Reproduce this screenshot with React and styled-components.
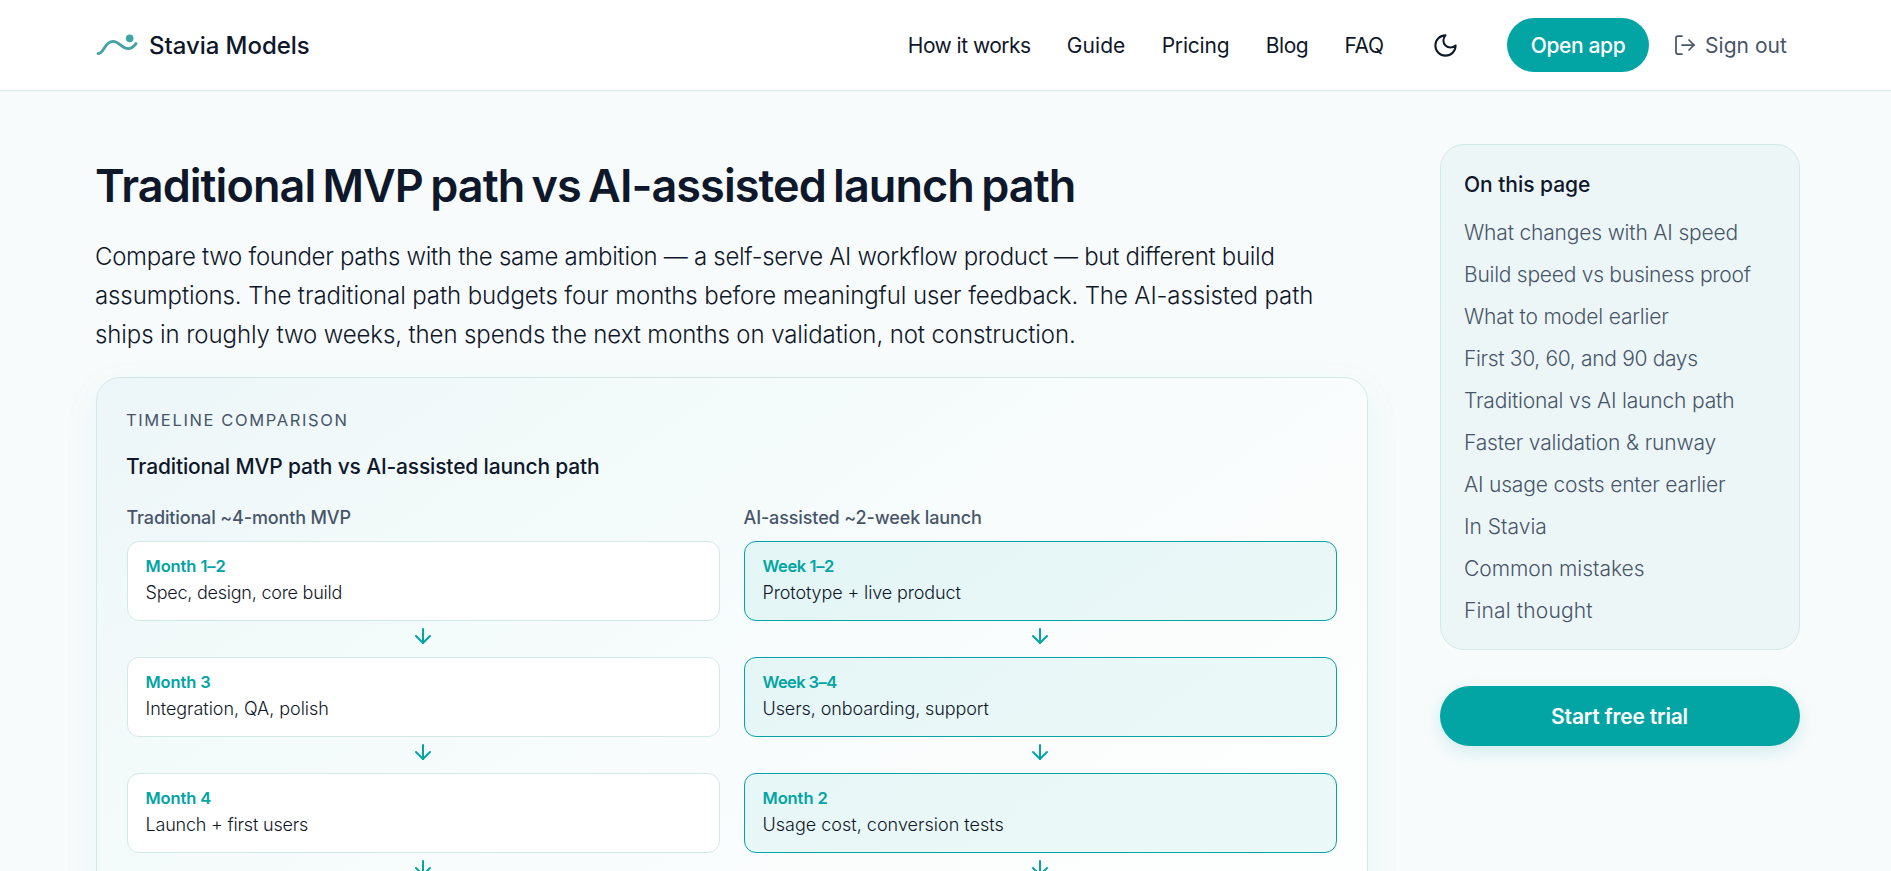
import React from 'react';
import styled, { createGlobalStyle } from 'styled-components';
import { ArrowDown, LogOut } from 'lucide-react';

const GlobalStyle = createGlobalStyle`
  *, *::before, *::after { box-sizing: border-box; }
  html, body, #root { height: 100%; }
  body {
    margin: 0;
    overflow: hidden;
    background: #f8fbfc;
    color: #0f172a;
    font-family: Inter, "Liberation Sans", sans-serif;
    font-weight: 300;
  }
  h1, h2, h3, p, ul { margin: 0; padding: 0; }
  a { color: inherit; text-decoration: none; }
  button { font: inherit; border: 0; cursor: pointer; }
`;

/* Text run with its own tracking, in em. */
const Tracked = styled.span`
  letter-spacing: ${(p) => p.$ls || 0}em;
  white-space: nowrap;
`;

const Header = styled.header`
  display: flex;
  align-items: center;
  justify-content: space-between;
  height: 91px;
  padding: 0 91px 0 96px;
  background: #fff;
  border-bottom: 1px solid #d5e8e8;
`;

const Brand = styled.a`
  display: flex;
  align-items: center;
  gap: 11px;
  font-size: 24px;
  font-weight: 500;
`;

const Actions = styled.div`
  display: flex;
  align-items: center;
`;

const Nav = styled.nav`
  display: flex;
  gap: 36.3px;
  font-size: 21px;
  font-weight: 400;
`;

const ThemeButton = styled.button`
  display: grid;
  place-items: center;
  width: 50.5px;
  height: 54px;
  margin: 0 36px 0 37px;
  padding: 0;
  background: none;
  color: #0f172a;
`;

const OpenApp = styled.a`
  display: flex;
  align-items: center;
  justify-content: center;
  width: 142px;
  height: 54px;
  border-radius: 27px;
  background: #02a4a4;
  color: #fff;
  font-size: 21px;
  font-weight: 500;
`;

const SignOut = styled.button`
  display: flex;
  align-items: center;
  gap: 8px;
  width: 151px;
  padding: 0 0 0 24px;
  background: none;
  color: #475569;
  font-size: 21px;
  font-weight: 400;
`;

const Layout = styled.main`
  display: grid;
  grid-template-columns: 1272px 360px;
  column-gap: 72px;
  padding: 53px 91px 0 96px;
`;

const Article = styled.article`
  padding-top: 15px;
`;

const Heading = styled.h1`
  margin-left: -1px;
  font-size: 45px;
  line-height: 54px;
  font-weight: 600;
  word-spacing: -0.07em;
`;

const Lead = styled.p`
  display: flex;
  flex-direction: column;
  margin: 24px 0 23px -1px;
  font-size: 24px;
  line-height: 39px;
`;

const Panel = styled.section`
  min-height: 640px;
  padding: 30px;
  border: 1px solid #d5e8e8;
  border-radius: 24px;
  background: linear-gradient(145deg, #edf6f8 0%, #f2fafa 25%, #fbfdfd 65%, #fff 100%);
  box-shadow: 0 12px 36px rgba(2, 164, 164, 0.07);
`;

const Eyebrow = styled.p`
  margin-left: -1px;
  font-size: 16.5px;
  line-height: 24px;
  font-weight: 400;
  color: #475569;
  text-transform: uppercase;
`;

const PanelTitle = styled.h2`
  margin: 20px 0 23px -1px;
  font-size: 21px;
  line-height: 30px;
  font-weight: 500;
`;

const Columns = styled.div`
  display: grid;
  grid-template-columns: 1fr 1fr;
  gap: 24px;
`;

const ColumnTitle = styled.h3`
  margin: 0 0 10px -0.5px;
  font-size: 18px;
  line-height: 26px;
  font-weight: 500;
  color: #475569;
`;

const Step = styled.div`
  height: 80px;
  padding: 12px 17.5px;
  border: 1px solid ${(p) => (p.$accent ? '#02a4a4' : '#d5e8e8')};
  border-radius: 12px;
  background: ${(p) => (p.$accent ? 'rgba(2, 164, 164, 0.07)' : '#fff')};
`;

const StepWhen = styled.p`
  font-size: 16.5px;
  line-height: 24px;
  font-weight: 600;
  color: #02a4a4;
`;

const StepWhat = styled.p`
  margin-top: 1px;
  font-size: 18px;
  line-height: 27px;
`;

const Connector = styled.div`
  display: flex;
  justify-content: center;
  height: 36px;
  padding: 3px 2px 0 0;
  color: #02a4a4;
`;

const Toc = styled.nav`
  height: 506px;
  padding: 25px 23px 0;
  border: 1px solid #d5e8e8;
  border-radius: 24px;
  background: #edf6f7;
`;

const TocTitle = styled.p`
  margin-bottom: 12px;
  font-size: 21px;
  line-height: 30px;
  font-weight: 500;
`;

const TocList = styled.ul`
  list-style: none;
  font-size: 21px;
  line-height: 42px;
  color: #475569;
`;

const TrialButton = styled.a`
  display: flex;
  align-items: center;
  justify-content: center;
  height: 60px;
  margin-top: 36px;
  padding-right: 1px;
  border-radius: 30px;
  background: #02a4a4;
  box-shadow: 0 6px 18px rgba(2, 164, 164, 0.16);
  color: #fff;
  font-size: 21px;
  font-weight: 600;
`;

const navItems = [
  ['How it works', -0.0248],
  ['Guide', 0.002],
  ['Pricing', -0.0097],
  ['Blog', -0.0193],
  ['FAQ', -0.0229],
];

const leadLines = [
  ['Compare two founder paths with the same ambition — a self-serve AI workflow product — but different build', -0.0126],
  ['assumptions. The traditional path budgets four months before meaningful user feedback. The AI-assisted path', -0.0042],
  ['ships in roughly two weeks, then spends the next months on validation, not construction.', -0.0043],
];

const columns = [
  {
    title: ['Traditional ~4-month MVP', -0.0078],
    steps: [
      [['Month 1–2', -0.0053], ['Spec, design, core build', -0.0131]],
      [['Month 3', -0.0079], ['Integration, QA, polish', -0.0026]],
      [['Month 4', -0.0079], ['Launch + first users', -0.0107]],
    ],
  },
  {
    title: ['AI-assisted ~2-week launch', -0.0071],
    accent: true,
    steps: [
      [['Week 1–2', -0.0242], ['Prototype + live product', -0.0065]],
      [['Week 3–4', -0.036], ['Users, onboarding, support', -0.0055]],
      [['Month 2', -0.0048], ['Usage cost, conversion tests', 0.0003]],
    ],
  },
];

const tocItems = [
  ['What changes with AI speed', -0.0083],
  ['Build speed vs business proof', -0.012],
  ['What to model earlier', -0.0085],
  ['First 30, 60, and 90 days', -0.0159],
  ['Traditional vs AI launch path', -0.0081],
  ['Faster validation & runway', -0.0076],
  ['AI usage costs enter earlier', -0.0085],
  ['In Stavia', 0.0008],
  ['Common mistakes', -0.0006],
  ['Final thought', 0.0072],
];

const Logo = () => (
  <svg width="42" height="30" viewBox="0 0 42 30" fill="none" aria-hidden="true">
    <path
      d="M2 23.6C8.3 23.6 8.4 11.4 17 11.4C23.5 11.4 25.3 18.6 32.2 18.6C36 18.6 38 16.2 40 13.6"
      stroke="#45a2a3"
      strokeWidth="2.9"
      strokeLinecap="round"
    />
    <circle cx="33.7" cy="8.4" r="3.8" fill="#3da5a5" />
  </svg>
);

const Moon = () => (
  <svg width="27" height="27" viewBox="0 0 24 24" fill="none" stroke="currentColor" strokeWidth="1.8" strokeLinecap="round" strokeLinejoin="round" aria-hidden="true">
    <path d="M12 3a6 6 0 0 0 9 9 9 9 0 1 1-9-9Z" />
  </svg>
);

export default function App() {
  return (
    <>
      <GlobalStyle />
      <Header>
        <Brand href="#">
          <Logo />
          <Tracked $ls={-0.002}>Stavia Models</Tracked>
        </Brand>
        <Actions>
          <Nav>
            {navItems.map(([label, ls]) => (
              <a href="#" key={label}><Tracked $ls={ls}>{label}</Tracked></a>
            ))}
          </Nav>
          <ThemeButton aria-label="Toggle theme"><Moon /></ThemeButton>
          <OpenApp href="#"><Tracked $ls={-0.0174}>Open app</Tracked></OpenApp>
          <SignOut>
            <LogOut size={24} strokeWidth={1.75} />
            <Tracked $ls={0.0016}>Sign out</Tracked>
          </SignOut>
        </Actions>
      </Header>
      <Layout>
        <Article>
          <Heading><Tracked $ls={-0.0208}>Traditional MVP path vs AI-assisted launch path</Tracked></Heading>
          <Lead>
            {leadLines.map(([line, ls]) => (
              <Tracked key={line} $ls={ls}>{line}</Tracked>
            ))}
          </Lead>
          <Panel>
            <Eyebrow><Tracked $ls={0.0987}>Timeline comparison</Tracked></Eyebrow>
            <PanelTitle><Tracked $ls={-0.0075}>Traditional MVP path vs AI-assisted launch path</Tracked></PanelTitle>
            <Columns>
              {columns.map(({ title, steps, accent }) => (
                <div key={title[0]}>
                  <ColumnTitle><Tracked $ls={title[1]}>{title[0]}</Tracked></ColumnTitle>
                  {steps.map(([when, what]) => (
                    <React.Fragment key={when[0]}>
                      <Step $accent={accent}>
                        <StepWhen><Tracked $ls={when[1]}>{when[0]}</Tracked></StepWhen>
                        <StepWhat><Tracked $ls={what[1]}>{what[0]}</Tracked></StepWhat>
                      </Step>
                      <Connector><ArrowDown size={24} strokeWidth={2} /></Connector>
                    </React.Fragment>
                  ))}
                </div>
              ))}
            </Columns>
          </Panel>
        </Article>
        <aside>
          <Toc>
            <TocTitle><Tracked $ls={-0.002}>On this page</Tracked></TocTitle>
            <TocList>
              {tocItems.map(([label, ls]) => (
                <li key={label}><a href="#"><Tracked $ls={ls}>{label}</Tracked></a></li>
              ))}
            </TocList>
          </Toc>
          <TrialButton href="#"><Tracked $ls={-0.009}>Start free trial</Tracked></TrialButton>
        </aside>
      </Layout>
    </>
  );
}
